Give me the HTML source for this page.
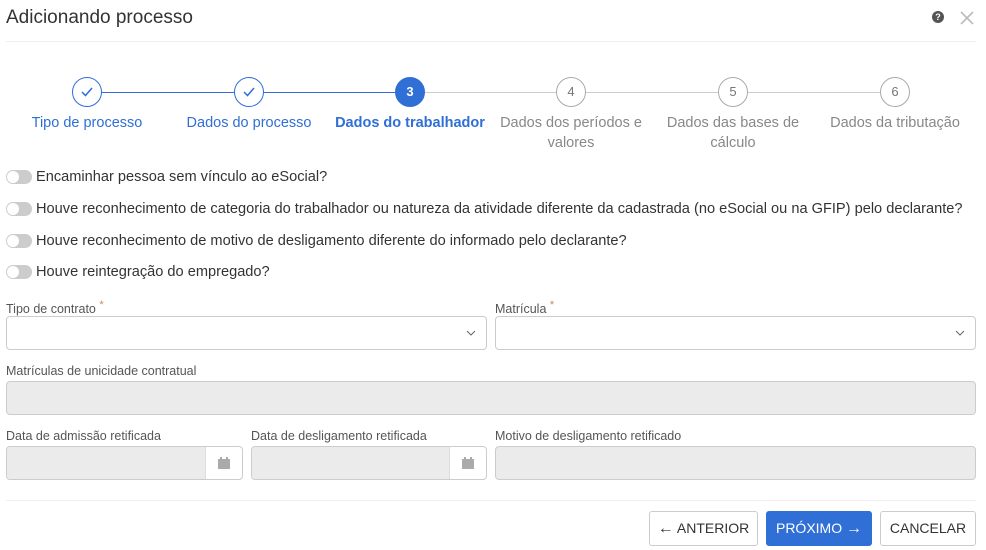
<!DOCTYPE html>
<html><head><meta charset="utf-8"><style>
*{box-sizing:border-box;margin:0;padding:0}
body{width:986px;height:550px;background:#fff;font-family:"Liberation Sans",sans-serif;color:#333;position:relative;overflow:hidden}
.abs{position:absolute}
.title{left:6px;top:7px;font-size:19px;color:#333}
.hr{left:6px;width:970px;height:1px;background:#eee}
.line{top:92px;height:1px}
.circ{width:30px;height:30px;border-radius:50%;border:1px solid #aaa;background:#fff;top:77px;text-align:center;line-height:28px;font-size:13px;color:#777}
.done{border-color:#2f6fd6;color:#2f6fd6}
.act{background:#2f6fd6;border-color:#2f6fd6;color:#fff;font-weight:bold}
.lbl{top:113px;width:160px;text-align:center;font-size:14.5px;line-height:20px;color:#888}
.tg{left:6px;width:26px;height:14px;border-radius:7px;background:#ccc}
.tg:after{content:"";position:absolute;left:1px;top:1px;width:12px;height:12px;border-radius:50%;background:#fff}
.tt{left:36px;font-size:14.6px;color:#333}
.fl{font-size:12.5px;color:#555}
.fl sup{color:#c85;font-size:11px}
.box{border:1px solid #ccc;border-radius:4px;height:34px}
.dis{background:#ebebeb}
.btn{top:511px;height:35px;border:1px solid #ccc;border-radius:3px;font-size:14px;text-align:center;line-height:33px;color:#333;background:#fff}
.btn b{font-size:16px}
</style></head><body>
<div class="abs title">Adicionando processo</div>
<div class="abs" style="left:932px;top:11px;width:12px;height:12px;border-radius:50%;background:#555;color:#fff;font-size:9px;font-weight:bold;text-align:center;line-height:12px">?</div>
<svg class="abs" style="left:960px;top:11px" width="14" height="14"><path d="M1 1L13 13M13 1L1 13" stroke="#bbb" stroke-width="1.6"/></svg>
<div class="abs hr" style="top:41px"></div>

<div class="abs line" style="left:87px;width:323px;background:#2f6fd6"></div>
<div class="abs line" style="left:410px;width:485px;background:#ccc"></div>
<div class="abs circ done" style="left:72px"><svg width="14" height="12" style="margin-top:8px"><path d="M2 6L5.5 9.5L12 2" stroke="#2f6fd6" stroke-width="1.5" fill="none"/></svg></div>
<div class="abs circ done" style="left:234px"><svg width="14" height="12" style="margin-top:8px"><path d="M2 6L5.5 9.5L12 2" stroke="#2f6fd6" stroke-width="1.5" fill="none"/></svg></div>
<div class="abs circ act" style="left:395px">3</div>
<div class="abs circ" style="left:556px">4</div>
<div class="abs circ" style="left:718px">5</div>
<div class="abs circ" style="left:880px">6</div>
<div class="abs lbl" style="left:7px;color:#2f6fd6">Tipo de processo</div>
<div class="abs lbl" style="left:169px;color:#2f6fd6">Dados do processo</div>
<div class="abs lbl" style="left:330px;color:#2f6fd6;font-weight:bold">Dados do trabalhador</div>
<div class="abs lbl" style="left:491px">Dados dos períodos e valores</div>
<div class="abs lbl" style="left:653px">Dados das bases de cálculo</div>
<div class="abs lbl" style="left:815px">Dados da tributação</div>

<div class="abs tg" style="top:170px"></div><div class="abs tt" style="top:169px">Encaminhar pessoa sem vínculo ao eSocial?</div>
<div class="abs tg" style="top:202px"></div><div class="abs tt" style="top:201px">Houve reconhecimento de categoria do trabalhador ou natureza da atividade diferente da cadastrada (no eSocial ou na GFIP) pelo declarante?</div>
<div class="abs tg" style="top:234px"></div><div class="abs tt" style="top:233px">Houve reconhecimento de motivo de desligamento diferente do informado pelo declarante?</div>
<div class="abs tg" style="top:265px"></div><div class="abs tt" style="top:264px">Houve reintegração do empregado?</div>

<div class="abs fl" style="left:6px;top:299px">Tipo de contrato <sup>*</sup></div>
<div class="abs fl" style="left:495px;top:299px">Matrícula <sup>*</sup></div>
<div class="abs box" style="left:6px;top:316px;width:481px"><svg class="abs" style="right:10px;top:13px" width="10" height="7"><path d="M1 1L5 5L9 1" stroke="#666" fill="none"/></svg></div>
<div class="abs box" style="left:495px;top:316px;width:481px"><svg class="abs" style="right:10px;top:13px" width="10" height="7"><path d="M1 1L5 5L9 1" stroke="#666" fill="none"/></svg></div>
<div class="abs fl" style="left:6px;top:364px">Matrículas de unicidade contratual</div>
<div class="abs box dis" style="left:6px;top:381px;width:970px"></div>
<div class="abs fl" style="left:6px;top:429px">Data de admissão retificada</div>
<div class="abs fl" style="left:251px;top:429px">Data de desligamento retificada</div>
<div class="abs fl" style="left:495px;top:429px">Motivo de desligamento retificado</div>
<div class="abs box" style="left:6px;top:446px;width:237px;overflow:hidden"><div style="width:199px;height:100%;background:#ebebeb;border-right:1px solid #ddd"></div><svg class="abs" style="left:211px;top:10px" width="12" height="12"><rect x="0" y="2" width="12" height="10" fill="#aaa"/><rect x="2" y="0" width="2" height="3" fill="#aaa"/><rect x="8" y="0" width="2" height="3" fill="#aaa"/></svg></div>
<div class="abs box" style="left:251px;top:446px;width:236px;overflow:hidden"><div style="width:198px;height:100%;background:#ebebeb;border-right:1px solid #ddd"></div><svg class="abs" style="left:210px;top:10px" width="12" height="12"><rect x="0" y="2" width="12" height="10" fill="#aaa"/><rect x="2" y="0" width="2" height="3" fill="#aaa"/><rect x="8" y="0" width="2" height="3" fill="#aaa"/></svg></div>
<div class="abs box dis" style="left:495px;top:446px;width:481px"></div>
<div class="abs hr" style="top:500px"></div>

<div class="abs btn" style="left:649px;width:109px"><b>&#8592;</b> ANTERIOR</div>
<div class="abs btn" style="left:766px;width:106px;background:#2f6fd6;border-color:#2f6fd6;color:#fff">PRÓXIMO <b>&#8594;</b></div>
<div class="abs btn" style="left:880px;width:96px">CANCELAR</div>
</body></html>
